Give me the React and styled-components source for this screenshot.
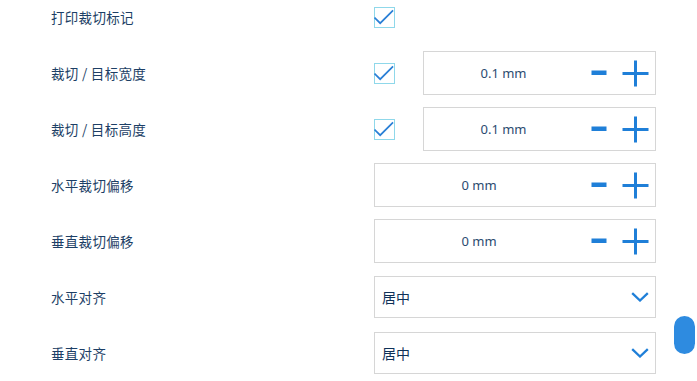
import React from "react";
import styled, { createGlobalStyle } from "styled-components";

const Global = createGlobalStyle`
  html, body { margin: 0; padding: 0; background: #fff; }
  body { width: 697px; height: 381px; overflow: hidden; font-family: "Noto Sans", "Noto Sans CJK SC", sans-serif; }
`;

const Page = styled.div`
  position: relative;
  width: 697px;
  height: 381px;
  overflow: hidden;
`;

const List = styled.div`
  margin-top: -11px;
  padding-left: 51px;
  display: flex;
  flex-direction: column;
`;

const Row = styled.div`
  height: 56px;
  display: grid;
  grid-template-columns: 323px 282px;
  align-items: center;
`;

const Label = styled.div`
  font-family: "Noto Sans CJK SC", sans-serif;
  font-size: 13.5px;
  color: #1d3f66;
  letter-spacing: 0.3px;
`;

const Controls = styled.div`
  display: flex;
  align-items: center;
  gap: 28px;
`;

const Check = styled.div`
  width: 19px;
  height: 19px;
  border: 1px solid #8fd8ea;
  flex: none;
  display: flex;
  align-items: center;
  justify-content: center;
`;

const Stepper = styled.div`
  flex: 1;
  height: 42px;
  border: 1px solid #d6d6d6;
  display: flex;
  align-items: center;
`;

const Value = styled.div`
  flex: 1;
  text-align: center;
  font-size: 13px;
  color: #2b4b70;
`;

const Btns = styled.div`
  width: 72px;
  display: flex;
  align-items: center;
  justify-content: flex-end;
  gap: 15px;
  padding-right: 6px;
  box-sizing: border-box;
`;

const Select = styled.div`
  flex: 1;
  height: 40px;
  border: 1px solid #d6d6d6;
  display: flex;
  align-items: center;
  justify-content: space-between;
  padding: 0 6px 0 7px;
  font-family: "Noto Sans CJK SC", sans-serif;
  font-size: 14px;
  color: #0e3158;
`;

const Thumb = styled.div`
  position: absolute;
  left: 674px;
  top: 316px;
  width: 21px;
  height: 38px;
  border-radius: 11px;
  background: #2e8be0;
`;

const BLUE = "#1f7fd8";

const CheckMark = () => (
  <svg width="21" height="21" viewBox="0 0 21 21" style={{ marginLeft: -1 }}>
    <path d="M0.5 10.5 L6.5 16.5 L20 3" fill="none" stroke="#2a7fd6" strokeWidth="1.8" />
  </svg>
);

const Minus = () => (
  <svg width="16" height="6" viewBox="0 0 16 6">
    <rect x="0.5" y="0.5" width="15" height="4.5" fill={BLUE} />
  </svg>
);

const Plus = () => (
  <svg width="27" height="27" viewBox="0 0 27 27">
    <path d="M13.5 0.5 V26.5 M0.5 13.5 H26.5" stroke={BLUE} strokeWidth="3" fill="none" />
  </svg>
);

const Chevron = () => (
  <svg width="18" height="10" viewBox="0 0 18 10">
    <path d="M1.2 1.2 L9 8.5 L16.8 1.2" fill="none" stroke={BLUE} strokeWidth="2.3" />
  </svg>
);

const StepperField = ({ value }) => (
  <Stepper>
    <Value>{value}</Value>
    <Btns>
      <Minus />
      <Plus />
    </Btns>
  </Stepper>
);

const SelectField = ({ value }) => (
  <Select>
    <span>{value}</span>
    <Chevron />
  </Select>
);

export default function App() {
  return (
    <Page>
      <Global />
      <List>
        <Row>
          <Label>打印裁切标记</Label>
          <Controls>
            <Check><CheckMark /></Check>
          </Controls>
        </Row>
        <Row>
          <Label>裁切 / 目标宽度</Label>
          <Controls>
            <Check><CheckMark /></Check>
            <StepperField value="0.1 mm" />
          </Controls>
        </Row>
        <Row>
          <Label>裁切 / 目标高度</Label>
          <Controls>
            <Check><CheckMark /></Check>
            <StepperField value="0.1 mm" />
          </Controls>
        </Row>
        <Row>
          <Label>水平裁切偏移</Label>
          <Controls>
            <StepperField value="0 mm" />
          </Controls>
        </Row>
        <Row>
          <Label>垂直裁切偏移</Label>
          <Controls>
            <StepperField value="0 mm" />
          </Controls>
        </Row>
        <Row>
          <Label>水平对齐</Label>
          <Controls>
            <SelectField value="居中" />
          </Controls>
        </Row>
        <Row>
          <Label>垂直对齐</Label>
          <Controls>
            <SelectField value="居中" />
          </Controls>
        </Row>
      </List>
      <Thumb />
    </Page>
  );
}
